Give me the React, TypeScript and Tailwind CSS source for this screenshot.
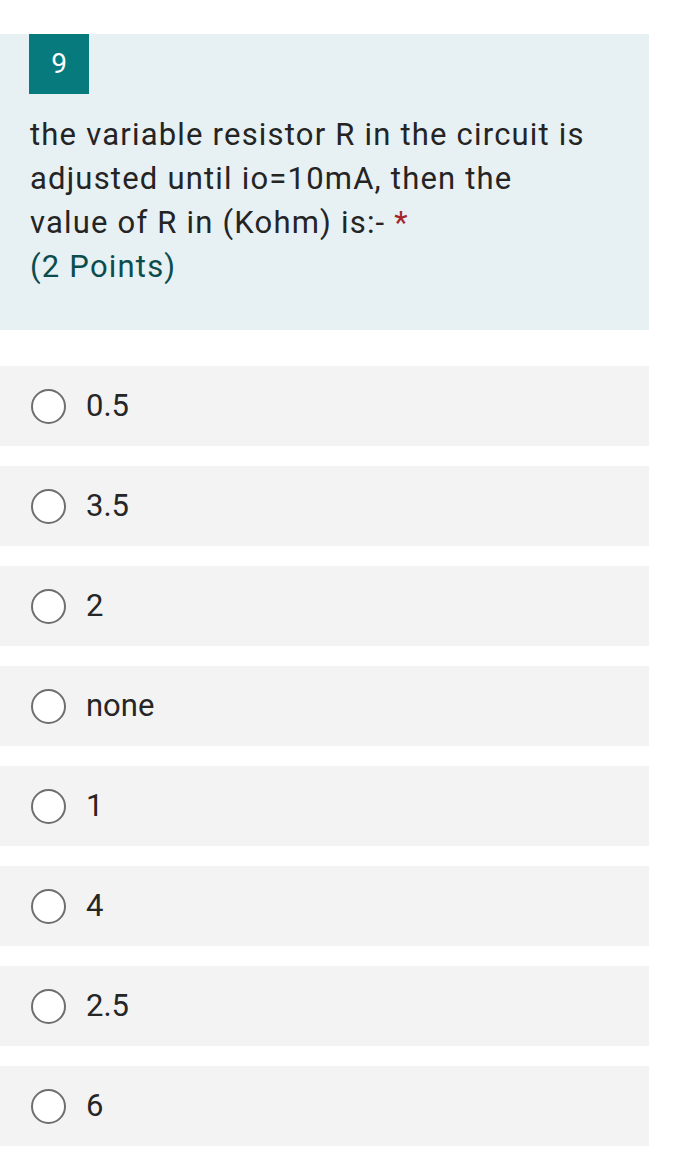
import React from "react";

const options = ["0.5", "3.5", "2", "none", "1", "4", "2.5", "6"];

export default function App() {
  return (
    <div className="w-[679px] min-h-[1152px] bg-white pt-[34px]" style={{ fontFamily: "Roboto, 'Liberation Sans', sans-serif" }}>
      <div className="w-[649px] bg-[#e7f0f3] pb-[41px]">
        <div className="ml-[29px] w-[60px] h-[60px] bg-[#077a7e] text-white text-[28px] flex items-center justify-center">9</div>
        <div className="pl-[30px] mt-[19px] text-[31px] leading-[44px] tracking-[1.2px] text-[#242424] whitespace-nowrap">
          <div>the variable resistor R in the circuit is</div>
          <div>adjusted until io=10mA, then the</div>
          <div>
            value of R in (Kohm) is:- <span className="text-[#a4262c]">*</span>
          </div>
          <div className="text-[#0b4d4d]">(2 Points)</div>
        </div>
      </div>
      <div className="mt-[36px] flex flex-col gap-[20px]">
        {options.map((o, i) => (
          <div key={i} className="w-[649px] h-[80px] bg-[#f3f3f3] flex items-center">
            <div className="ml-[31px] w-[35px] h-[35px] rounded-full border-2 border-[#6e6e6e] bg-white shrink-0" />
            <div className="ml-[20px] text-[31px] text-[#262626]">{o}</div>
          </div>
        ))}
      </div>
    </div>
  );
}
